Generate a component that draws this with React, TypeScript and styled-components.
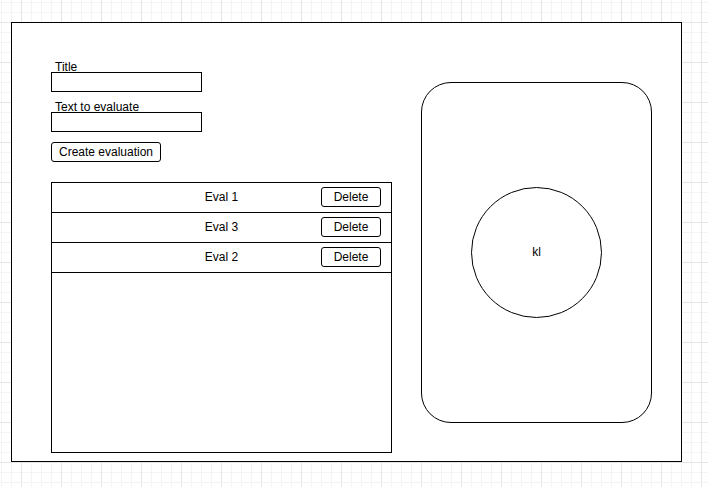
import React from "react";
import styled, { createGlobalStyle } from "styled-components";

const GlobalStyle = createGlobalStyle`
  html, body {
    margin: 0;
    padding: 0;
  }
  body {
    width: 708px;
    height: 487px;
    overflow: hidden;
    font-family: "Liberation Sans", Arial, sans-serif;
    font-size: 12px;
    color: #000;
    background-color: #ffffff;
    background-image:
      linear-gradient(to right, #e6e6e6 1px, transparent 1px),
      linear-gradient(to bottom, #e6e6e6 1px, transparent 1px),
      linear-gradient(to right, #f4f4f4 1px, transparent 1px),
      linear-gradient(to bottom, #f4f4f4 1px, transparent 1px);
    background-size: 40px 40px, 40px 40px, 10px 10px, 10px 10px;
    background-position: 21px 22px, 21px 22px, 1px 2px, 1px 2px;
  }
`;

const Frame = styled.div`
  box-sizing: border-box;
  margin: 22px 0 0 11px;
  width: 671px;
  height: 440px;
  border: 1px solid #000;
  background: #fff;
  display: flex;
  align-items: flex-start;
`;

const LeftColumn = styled.div`
  display: flex;
  flex-direction: column;
  align-items: flex-start;
  padding: 36px 0 0 39px;
`;

const Field = styled.div<{ $gap?: number }>`
  display: flex;
  flex-direction: column;
  align-items: flex-start;
  margin-top: ${(p) => p.$gap ?? 0}px;
`;

const Label = styled.label`
  display: block;
  height: 13px;
  line-height: 16px;
  padding-left: 4px;
  font-size: 12px;
  white-space: nowrap;
`;

const TextInput = styled.input`
  box-sizing: border-box;
  width: 151px;
  height: 20px;
  margin: 0;
  padding: 0 3px;
  border: 1px solid #000;
  border-radius: 0;
  background: #fff;
  font-family: "Liberation Sans", Arial, sans-serif;
  font-size: 12px;
  outline: none;
`;

const Button = styled.button<{ $width: number }>`
  box-sizing: border-box;
  width: ${(p) => p.$width}px;
  height: 20px;
  margin: 0;
  padding: 0;
  border: 1px solid #000;
  border-radius: 3px;
  background: #fff;
  color: #000;
  font-family: "Liberation Sans", Arial, sans-serif;
  font-size: 12px;
  line-height: 18px;
  text-align: center;
  cursor: pointer;
`;

const CreateButton = styled(Button)`
  margin-top: 10px;
`;

const List = styled.div`
  box-sizing: border-box;
  margin-top: 20px;
  width: 341px;
  height: 271px;
  border: 1px solid #000;
  display: flex;
  flex-direction: column;
`;

const Row = styled.div`
  box-sizing: border-box;
  height: 30px;
  border-bottom: 1px solid #000;
  display: grid;
  grid-template-areas: "cell";
  align-items: center;
  padding: 0 10px 1px 0;
`;

const RowTitle = styled.span`
  grid-area: cell;
  justify-self: center;
  padding-left: 10px;
  font-size: 12px;
`;

const DeleteButton = styled(Button)`
  grid-area: cell;
  justify-self: end;
`;

const Panel = styled.div`
  box-sizing: border-box;
  margin: 59px 0 0 29px;
  width: 231px;
  height: 341px;
  border: 1px solid #000;
  border-radius: 30px;
  display: flex;
  align-items: center;
  justify-content: center;
`;

const Circle = styled.div`
  box-sizing: border-box;
  width: 131px;
  height: 131px;
  padding-bottom: 2px;
  border: 1px solid #000;
  border-radius: 50%;
  display: flex;
  align-items: center;
  justify-content: center;
  font-size: 12px;
`;

const evals = ["Eval 1", "Eval 3", "Eval 2"];

export default function App() {
  return (
    <>
      <GlobalStyle />
      <Frame>
        <LeftColumn>
          <Field>
            <Label>Title</Label>
            <TextInput />
          </Field>
          <Field $gap={7}>
            <Label>Text to evaluate</Label>
            <TextInput />
          </Field>
          <CreateButton $width={110}>Create evaluation</CreateButton>
          <List>
            {evals.map((e) => (
              <Row key={e}>
                <RowTitle>{e}</RowTitle>
                <DeleteButton $width={60}>Delete</DeleteButton>
              </Row>
            ))}
          </List>
        </LeftColumn>
        <Panel>
          <Circle>kl</Circle>
        </Panel>
      </Frame>
    </>
  );
}
